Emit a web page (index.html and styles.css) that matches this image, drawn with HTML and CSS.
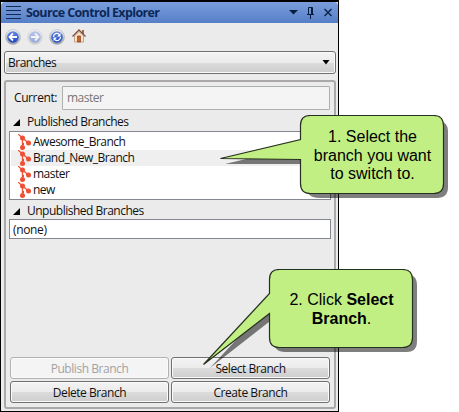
FILE: index.html
```html
<!DOCTYPE html>
<html lang="en">
<head>
<meta charset="utf-8">
<title>Source Control Explorer</title>
<link rel="stylesheet" href="styles.css">
</head>
<body>
<svg class="defs" width="0" height="0">
  <defs>
    <linearGradient id="ring" x1="0" y1="0" x2="0" y2="1"><stop offset="0" stop-color="#f4f4f4"/><stop offset="1" stop-color="#989ba5"/></linearGradient>
    <linearGradient id="blue" x1="0" y1="0" x2="0" y2="1"><stop offset="0" stop-color="#6b8ce0"/><stop offset="1" stop-color="#1746c4"/></linearGradient>
    <symbol id="branch" viewBox="0 0 14 16">
      <path d="M0 0L4.500 4V13M4.500 4L10.500 9" fill="none" stroke="#ef5033" stroke-width="1.300"/>
      <path d="M5.500 9v2" stroke="#4a9a30"/>
      <circle cx="4.500" cy="4" r="2.500" fill="#ef5033"/><circle cx="10.500" cy="9" r="2.500" fill="#ef5033"/><circle cx="4.500" cy="13.500" r="2.500" fill="#ef5033"/>
    </symbol>
  </defs>
</svg>
<main class="window">
  <header class="titlebar">
    <svg class="menu" width="15" height="16"><path d="M0 1.500h15M0 5.500h15M0 9.500h15M0 13.500h15" stroke="#102a56"/></svg>
    <h1>Source Control Explorer</h1>
    <svg class="controls" width="44" height="14"><path d="M0 4h9L4.500 8.500z" fill="#071d40"/><path d="M19.500 8V1.500h4V8M22.500 2v6M18 8.500h7M21.500 9v4" fill="none" stroke="#071d40"/><path d="M35.500 3l7 7m0-7l-7 7" stroke="#071d40" stroke-width="1.200"/></svg>
  </header>
  <nav class="toolbar">
    <svg width="16" height="16"><circle cx="8" cy="8" r="7.500" fill="url(#ring)" stroke="#b0b3bc" stroke-width=".6"/><circle cx="8" cy="8" r="5.800" fill="url(#blue)"/><path d="M12 8H5M8 4.500L4.500 8L8 11.500" fill="none" stroke="#fff" stroke-width="1.800"/></svg>
    <svg class="faded" width="16" height="16"><circle cx="8" cy="8" r="7.500" fill="url(#ring)" stroke="#b0b3bc" stroke-width=".6"/><circle cx="8" cy="8" r="5.800" fill="url(#blue)"/><path d="M4 8h7M8 4.500L11.500 8L8 11.500" fill="none" stroke="#fff" stroke-width="1.800"/></svg>
    <svg width="16" height="16"><circle cx="8" cy="8" r="7.500" fill="url(#ring)" stroke="#b0b3bc" stroke-width=".6"/><circle cx="8" cy="8" r="5.800" fill="url(#blue)"/><path d="M4.500 8C4.500 4.500 8 3.500 10.500 5.500M11.500 8C11.500 11.500 8 12.500 5.500 10.500" fill="none" stroke="#fff" stroke-width="1.200"/><path d="M11.500 4v3.500H8zM4.500 12v-3.500h3.500z" fill="#fff"/></svg>
    <svg class="home" width="14" height="14"><path d="M10 1h2v4h-2z" fill="#9c6a50"/><path d="M2.500 7L7 2.500L11.500 7v6h-9z" fill="#f7e3cf" stroke="#b99072" stroke-width=".8"/><path d="M.5 7.500L7 1l6.500 6.500" fill="none" stroke="#82513d" stroke-width="1.300"/><path d="M5.500 7h3v6h-3z" fill="#c86424" stroke="#86441f" stroke-width=".7"/></svg>
  </nav>
  <div class="combo"><span>Branches</span><svg width="8" height="5"><path d="M.5 0h7L4 4.500z"/></svg></div>
  <section class="panel">
    <div class="current"><label>Current:</label><div class="field"><span>master</span></div></div>
    <h2><svg width="7" height="7"><path d="M7 0v7H0z"/></svg><span>Published Branches</span></h2>
    <ul class="list">
      <li><svg width="14" height="16"><use href="#branch"/></svg><span>Awesome_Branch</span></li>
      <li class="hover"><svg width="14" height="16"><use href="#branch"/></svg><span>Brand_New_Branch</span></li>
      <li><svg width="14" height="16"><use href="#branch"/></svg><span>master</span></li>
      <li><svg width="14" height="16"><use href="#branch"/></svg><span>new</span></li>
    </ul>
    <h2 class="second"><svg width="7" height="7"><path d="M7 0v7H0z"/></svg><span>Unpublished Branches</span></h2>
    <div class="empty"><span>(none)</span></div>
    <div class="actions">
      <button disabled><span>Publish Branch</span></button><button><span>Select Branch</span></button>
      <button><span>Delete Branch</span></button><button><span>Create Branch</span></button>
    </div>
  </section>
</main>
<aside class="callout first">
  <svg width="230" height="86"><path class="shadow" d="M93 5H213Q228 5 228 16V72Q228 83 217 83H101Q90 83 88 78V49H5L85 30z"/><path class="bubble" d="M90.500 .5H213.500Q223.500 .5 223.500 10.500V68.500Q223.500 78.500 213.500 78.500H90.500Q80.500 78.500 80.500 68.500V44.500L.5 43.500L80.500 24.500V10.500Q80.500 .5 90.500 .5z"/></svg>
  <p>1. Select the<br>branch you want<br>to switch to.</p>
</aside>
<aside class="callout last">
  <svg width="216" height="101"><path class="shadow" d="M78 5H202Q214 5 214 16V72Q214 83 204 83H82Q71 83 71 72V49L7 99L71 30z"/><path class="bubble" d="M76.500 .5H199.500Q209.500 .5 209.500 10.500V68.500Q209.500 78.500 199.500 78.500H76.500Q66.500 78.500 66.500 68.500V44.500L.5 95.500L66.500 24.500V10.500Q66.500 .5 76.500 .5z"/></svg>
  <p>2. Click <b>Select</b><br><b>Branch</b>.</p>
</aside>
</body>
</html>
```
FILE: styles.css
```css
* { box-sizing: border-box; }
body { margin: 0; width: 459px; height: 412px; overflow: hidden; background: #fff; position: relative; font: 12px/16px "Open Sans", "Noto Sans", sans-serif; letter-spacing: -.5px; color: #111; }
svg { display: block; flex: none; }
.defs { position: absolute; }
h1, h2, p, ul { margin: 0; padding: 0; }
span, label, h1 { white-space: nowrap; }
.window { width: 339px; height: 412px; border: 1px solid #000; border-top-width: 2px; background: #ebebeb; display: flex; flex-direction: column; }
.titlebar { height: 21px; flex: none; border-radius: 4px 4px 0 0; background: linear-gradient(#7b9edb, #557fc8); display: flex; align-items: center; padding: 0 5px; }
.titlebar h1 { margin-left: 5px; font: bold 12.500px/20px "Open Sans", sans-serif; color: #0c2856; letter-spacing: -.63px; }
.controls { margin-left: auto; }
.toolbar { height: 28px; flex: none; display: flex; align-items: center; gap: 6px; padding: 0 4px; }
.home { margin-left: 1px; margin-bottom: 2px; }
.faded { opacity: .4; }
.combo { height: 23px; flex: none; margin: 0 2px 0 3px; border: 1px solid #707070; border-radius: 3px; box-shadow: inset 0 0 0 1px #fafafa; background: linear-gradient(#f3f3f3, #ebebeb 50%, #dcdcdc 50%, #cdcdcd); display: flex; align-items: center; justify-content: space-between; padding: 0 5px 0 3px; }
.panel { flex: 1; margin: 6px 2px 2px 3px; border: 2px solid #a9a9a9; border-radius: 3px; padding: 4px 3px 4px; display: flex; flex-direction: column; }
.current { height: 24px; display: flex; align-items: center; padding-left: 5px; }
.current label { width: 48px; letter-spacing: -.4px; }
.field { flex: 1; height: 24px; border: 1px solid #abb1ab; border-radius: 1px; background: #f4f4f4; color: #777; padding: 3px 4px; margin-right: 1px; }
h2 { height: 21px; font: inherit; display: flex; align-items: center; gap: 7px; padding: 2px 0 0 4px; }
h2 svg { margin-top: 1px; }
.list { list-style: none; height: 69px; border: 1px solid #828790; background: #fff; padding: 2px 1px; }
.list li { height: 16px; display: flex; align-items: center; padding-left: 7px; gap: 1px; }
.hover { background: #efefef; }
.second { height: 19px; }
.empty { height: 20px; border: 1px solid #828790; background: #fff; padding: 2px 3px 0; letter-spacing: -.35px; }
.actions { margin-top: auto; display: grid; grid-template-columns: 159px 159px; grid-auto-rows: 22px; gap: 2px; padding-left: 1px; }
button { font: inherit; letter-spacing: -.45px; color: inherit; border: 1px solid #707070; border-radius: 3px; padding: 1px 0 0; box-shadow: inset 0 0 0 1px #fafafa; background: linear-gradient(#f3f3f3, #ebebeb 50%, #dcdcdc 50%, #cdcdcd); }
button:disabled { border-color: #adb2b5; background: #f4f4f4; color: #a3a3a3; }
.callout { position: absolute; letter-spacing: 0; }
.callout p { position: absolute; font: 16px/18.700px "Liberation Sans", sans-serif; color: #000; text-align: center; white-space: nowrap; }
.first { left: 220px; top: 115px; }
.first p { left: 81px; width: 143px; top: 13px; }
.last { left: 203px; top: 269px; }
.last p { left: 67px; width: 143px; top: 22px; }
.bubble { fill: #c2ef84; stroke: #26301f; stroke-width: 1.200; }
.shadow { fill: #000; fill-opacity: .5; }
```
